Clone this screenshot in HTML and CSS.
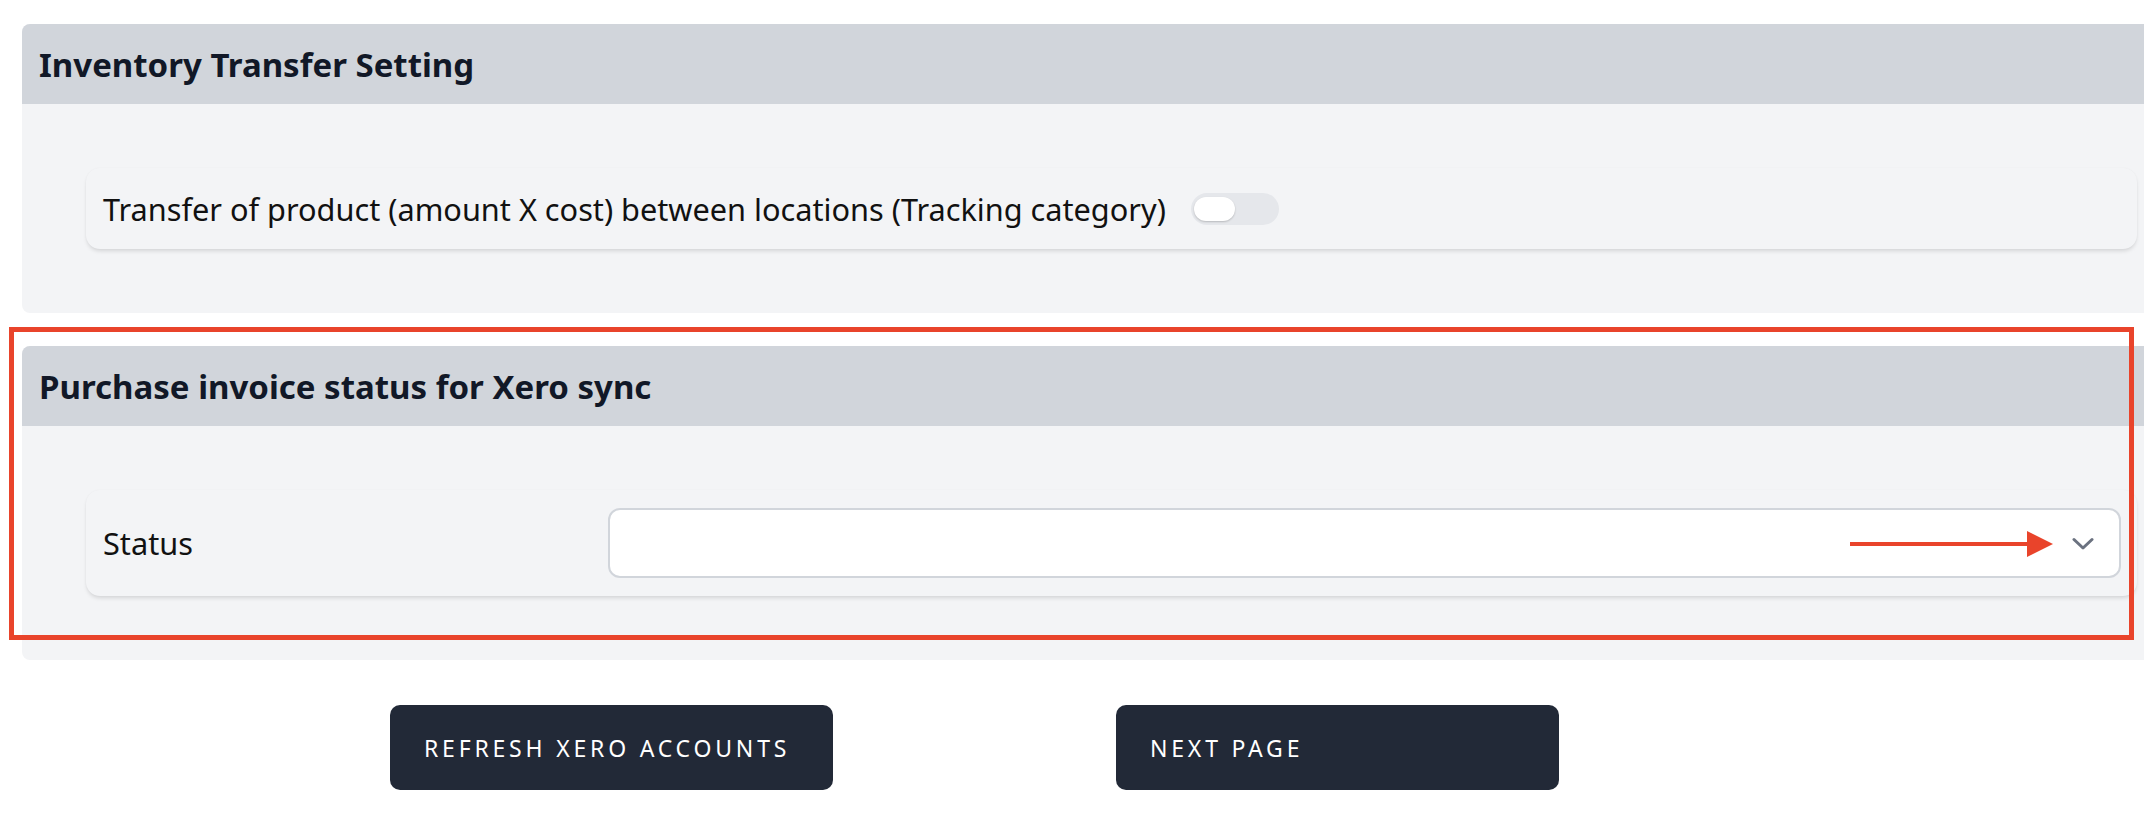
FILE: index.html
```html
<!DOCTYPE html>
<html lang="en">
<head>
<meta charset="utf-8">
<title>Xero settings</title>
<link rel="stylesheet" href="styles.css">
</head>
<body>
<main class="page">
  <section class="panel">
    <header class="panel-head"><h2 class="panel-title">Inventory Transfer Setting</h2></header>
    <div class="panel-body">
      <div class="field-card field-inline">
        <span class="field-label">Transfer of product (amount X cost) between locations (Tracking category)</span>
        <span class="toggle" role="switch" aria-checked="false"><span class="toggle-knob"></span></span>
      </div>
    </div>
  </section>

  <section class="panel panel-marked">
    <header class="panel-head"><h2 class="panel-title">Purchase invoice status for Xero sync</h2></header>
    <div class="panel-body">
      <div class="field-card field-grid">
        <span class="field-label">Status</span>
        <div class="select">
          <svg class="select-chevron" width="22" height="14" viewBox="0 0 22 14"><path d="M2 2.5 L11 11 L20 2.5" fill="none" stroke="#6b7280" stroke-width="3" stroke-linecap="round" stroke-linejoin="round"/></svg>
          <svg class="annot-arrow" width="206" height="28" viewBox="0 0 206 28"><line x1="0" y1="14" x2="180" y2="14" stroke="#e9442b" stroke-width="4"/><polygon points="177,1 203,14 177,27" fill="#e9442b"/></svg>
        </div>
      </div>
    </div>
    <div class="annot-box"></div>
  </section>

  <div class="actions">
    <button class="btn" type="button">Refresh Xero Accounts</button>
    <button class="btn" type="button">Next Page</button>
  </div>
</main>
</body>
</html>
```
FILE: styles.css
```css
html, body {
  margin: 0;
  padding: 0;
  background: #ffffff;
  overflow: hidden;
}
body {
  font-family: "Noto Sans", "Open Sans", sans-serif;
  color: #111827;
}
.page {
  padding: 24px 0 0 22px;
  display: flex;
  flex-direction: column;
}
.panel {
  position: relative;
  background: #f3f4f6;
  border-radius: 8px 0 0 8px;
  margin-bottom: 33px;
}
.panel-head {
  background: #d1d5db;
  height: 80px;
  display: flex;
  align-items: center;
  padding-left: 17px;
  border-radius: 8px 0 0 0;
}
.panel-title {
  margin: 0;
  font-size: 33px;
  font-weight: 700;
  color: #111827;
}
.panel-body {
  padding: 64px 7px 64px 64px;
}
.field-card {
  background: #f3f4f6;
  border-radius: 14px;
  box-shadow: 0 3px 4px -1px rgba(0, 0, 0, 0.13), 0 0 2px rgba(0, 0, 0, 0.04);
  padding: 0 16px 0 17px;
}
.field-inline {
  height: 81px;
  display: flex;
  align-items: center;
  gap: 25px;
}
.field-grid {
  display: grid;
  grid-template-columns: 1fr 3fr;
  align-items: center;
  padding-top: 18px;
  padding-bottom: 18px;
}
.field-label {
  font-size: 30.7px;
  color: #111111;
}
.toggle {
  width: 88px;
  height: 32px;
  border-radius: 16px;
  background: #e5e7eb;
  display: flex;
  align-items: center;
  padding-left: 3px;
  box-sizing: border-box;
}
.toggle-knob {
  width: 41px;
  height: 24px;
  border-radius: 12px;
  background: #ffffff;
  box-shadow: 0 1px 2px rgba(0, 0, 0, 0.2);
}
.select {
  position: relative;
  height: 70px;
  box-sizing: border-box;
  border: 2px solid #d1d5db;
  border-radius: 12px;
  background: #ffffff;
}
.select-chevron {
  position: absolute;
  right: 25px;
  top: 27px;
}
.annot-arrow {
  position: absolute;
  left: 1240px;
  top: 20px;
}
.annot-box {
  position: absolute;
  left: -13px;
  top: -19px;
  width: 2125px;
  height: 313px;
  box-sizing: border-box;
  border: 5px solid #e9442b;
  pointer-events: none;
}
.actions {
  display: flex;
  gap: 283px;
  padding-left: 368px;
  margin-top: 12px;
}
.btn {
  width: 443px;
  height: 85px;
  border: none;
  border-radius: 10px;
  background: #222937;
  color: #ffffff;
  font-family: "Noto Sans", sans-serif;
  font-size: 23px;
  letter-spacing: 3.8px;
  text-transform: uppercase;
  text-align: left;
  padding: 0 0 0 34px;
}
```
